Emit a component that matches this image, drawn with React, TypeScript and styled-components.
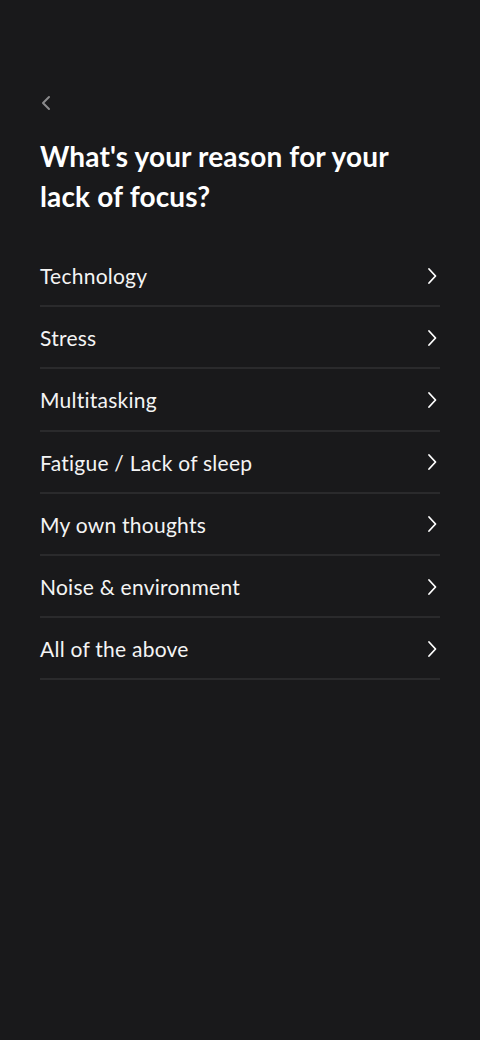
import React from 'react';
import styled, { createGlobalStyle } from 'styled-components';

const GlobalStyle = createGlobalStyle`
    html, body {
        margin: 0;
        padding: 0;
        background-color: #19191b;
    }
    body {
        font-family: Lato, "Noto Sans", sans-serif;
        -webkit-font-smoothing: antialiased;
    }
`;

const Screen = styled.div`
    min-height: 1040px;
    box-sizing: border-box;
    padding: 91px 40px 0;
    background-color: #19191b;
    color: #ffffff;
    display: flex;
    flex-direction: column;
`;

const BackButton = styled.button`
    width: 24px;
    height: 24px;
    padding: 0;
    margin: 0 0 21px -6px;
    border: none;
    background: none;
    display: flex;
    align-items: center;
    justify-content: center;
    color: #8a8a8c;
    cursor: pointer;
`;

const Title = styled.h1`
    margin: 0 0 29px;
    font-size: 28px;
    line-height: 40px;
    font-weight: 700;
    letter-spacing: 0.15px;
    color: #ffffff;
`;

const OptionList = styled.ul`
    list-style: none;
    margin: 0;
    padding: 0;
`;

const OptionRow = styled.li`
    height: 62.2px;
    box-sizing: border-box;
    display: flex;
    align-items: center;
    justify-content: space-between;
    border-bottom: 2px solid #2a2a2c;
    font-size: 21px;
    font-weight: 400;
    letter-spacing: 0.25px;
    color: #f4f4f4;
    cursor: pointer;
    padding-top: 1px;
`;

const Chevron = styled.svg`
    margin-right: 2px;
    color: #ffffff;
`;

const options = [
    'Technology',
    'Stress',
    'Multitasking',
    'Fatigue / Lack of sleep',
    'My own thoughts',
    'Noise & environment',
    'All of the above',
];

const App: React.FC = () => {
    return (
        <>
            <GlobalStyle />
            <Screen>
                <BackButton aria-label="Back">
                    <svg width="14" height="16" viewBox="0 0 14 16" fill="none">
                        <path d="M10 2 L4 8 L10 14" stroke="currentColor" strokeWidth="2" strokeLinecap="round" strokeLinejoin="round" />
                    </svg>
                </BackButton>
                <Title>
                    What's your reason for your
                    <br />
                    lack of focus?
                </Title>
                <OptionList>
                    {options.map((option) => (
                        <OptionRow key={option}>
                            {option}
                            <Chevron width="12" height="18" viewBox="0 0 12 18" fill="none">
                                <path d="M3 2 L9.5 9 L3 16" stroke="currentColor" strokeWidth="1.8" strokeLinecap="round" strokeLinejoin="round" />
                            </Chevron>
                        </OptionRow>
                    ))}
                </OptionList>
            </Screen>
        </>
    );
};

export default App;
